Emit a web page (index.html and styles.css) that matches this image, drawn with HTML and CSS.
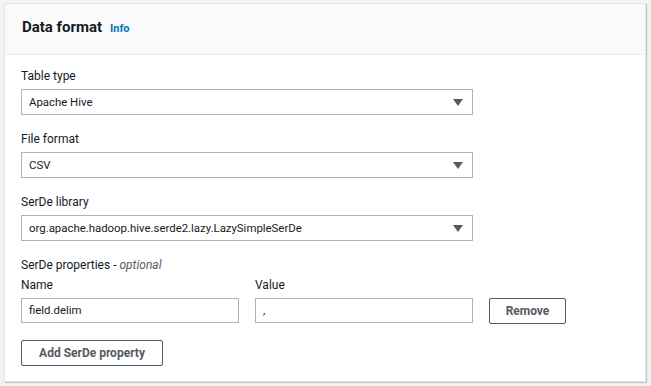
FILE: index.html
```html
<!DOCTYPE html>
<html>
<head>
<meta charset="utf-8">
<link rel="stylesheet" href="styles.css">
</head>
<body>
<div class="card">
  <div class="card-header">
    <h2 class="title">Data format</h2>
    <a class="info">Info</a>
  </div>
  <div class="card-body">
    <div class="field">
      <div class="label">Table type</div>
      <div class="select"><span>Apache Hive</span><svg class="caret" width="10" height="7" viewBox="0 0 10 7"><path d="M0 0H10L5 7Z" fill="#545b64"/></svg></div>
    </div>
    <div class="field">
      <div class="label">File format</div>
      <div class="select"><span>CSV</span><svg class="caret" width="10" height="7" viewBox="0 0 10 7"><path d="M0 0H10L5 7Z" fill="#545b64"/></svg></div>
    </div>
    <div class="field">
      <div class="label">SerDe library</div>
      <div class="select"><span>org.apache.hadoop.hive.serde2.lazy.LazySimpleSerDe</span><svg class="caret" width="10" height="7" viewBox="0 0 10 7"><path d="M0 0H10L5 7Z" fill="#545b64"/></svg></div>
    </div>
    <div class="field props">
      <div class="label">SerDe properties - <i>optional</i></div>
      <div class="prop-row">
        <div class="col">
          <div class="label sub">Name</div>
          <div class="input">field.delim</div>
        </div>
        <div class="col">
          <div class="label sub">Value</div>
          <div class="input">,</div>
        </div>
        <div class="btn remove">Remove</div>
      </div>
    </div>
    <div class="btn add">Add SerDe property</div>
  </div>
</div>
</body>
</html>
```
FILE: styles.css
```css
* { box-sizing: border-box; }
body {
  margin: 0;
  background: #f2f3f3;
  font-family: Roboto, "Open Sans", sans-serif;
  color: #16191f;
  width: 651px;
  height: 386px;
  overflow: hidden;
}
.card {
  margin: 3px 0 0 4px;
  width: 642px;
  height: 379px;
  background: #fff;
  border: 1px solid #e3e6e6;
  box-shadow: 1px 1px 1px rgba(0, 28, 36, 0.2);
}
.card-header {
  height: 51px;
  background: #fafafa;
  border-bottom: 1px solid #eaeded;
  display: flex;
  align-items: baseline;
  padding: 12px 0 0 17px;
}
.title {
  margin: 0;
  font-size: 15px;
  font-weight: 700;
  line-height: 22px;
  color: #16191f;
}
.info {
  margin-left: 8px;
  font-size: 11px;
  font-weight: 700;
  color: #0073bb;
}
.card-body {
  padding: 13px 0 0 16px;
}
.field {
  margin-bottom: 16px;
}
.label {
  font-size: 12px;
  line-height: 16px;
  color: #16191f;
  margin-bottom: 5px;
}
.label i { color: #545b64; }
.select {
  width: 452px;
  height: 26px;
  border: 1px solid #aab7b8;
  display: flex;
  align-items: center;
  justify-content: space-between;
  padding: 0 9px 0 7px;
  font-size: 11.4px;
}
.props { margin-bottom: 17px; }
.props > .label { margin-bottom: 4px; }
.prop-row {
  display: flex;
  align-items: flex-end;
  gap: 16px;
}
.col { width: 218px; }
.input {
  width: 218px;
  height: 25px;
  border: 1px solid #aab7b8;
  padding: 0 7px;
  font-size: 11.4px;
  line-height: 23px;
}
.btn {
  height: 26px;
  border: 1px solid #545b64;
  border-radius: 2px;
  font-size: 12px;
  font-weight: 700;
  color: #545b64;
  display: flex;
  align-items: center;
  justify-content: center;
}
.remove { width: 77px; margin-bottom: -1px; }
.add { width: 142px; }
```
